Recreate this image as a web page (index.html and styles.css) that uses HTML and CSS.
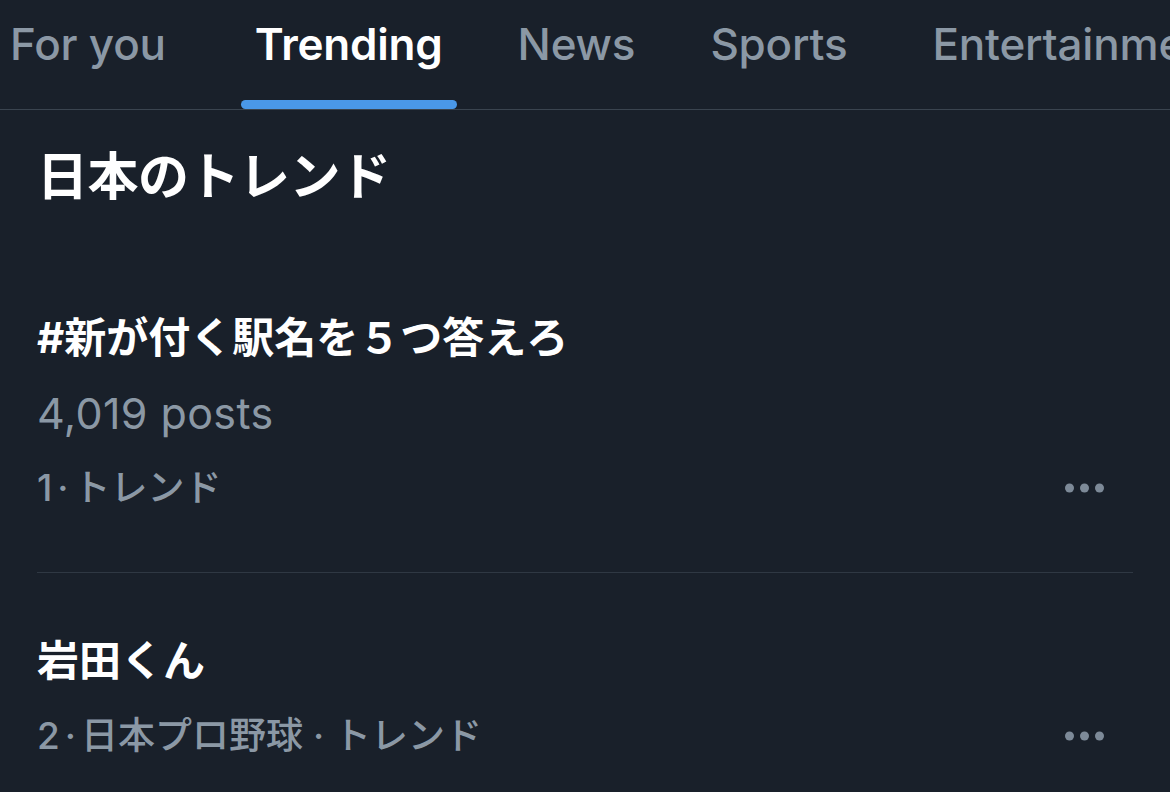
FILE: index.html
```html
<!DOCTYPE html>
<html lang="ja">
<head>
<meta charset="utf-8">
<title>Trending</title>
<link rel="stylesheet" href="styles.css">
</head>
<body>
<nav class="tabs">
  <div class="tab"><span class="label">For you</span></div>
  <div class="tab active"><span class="label">Trending</span><span class="bar"></span></div>
  <div class="tab"><span class="label">News</span></div>
  <div class="tab"><span class="label">Sports</span></div>
  <div class="tab tab-wide"><span class="label">Entertainment</span></div>
</nav>
<main class="content">
  <h1 class="heading">日本のトレンド</h1>
  <section class="trend first">
    <div class="title">#新が付く駅名を５つ答えろ</div>
    <div class="posts">4,019 posts</div>
    <div class="meta-row">
      <span class="meta">1<span class="dot">·</span>トレンド</span>
      <svg class="more" width="48" height="20" viewBox="0 0 48 20"><circle cx="8.5" cy="10" r="4.5"/><circle cx="23.5" cy="10" r="4.5"/><circle cx="38.5" cy="10" r="4.5"/></svg>
    </div>
  </section>
  <section class="trend">
    <div class="title">岩田くん</div>
    <div class="meta-row">
      <span class="meta">2<span class="dot">·</span>日本プロ野球 · トレンド</span>
      <svg class="more" width="48" height="20" viewBox="0 0 48 20"><circle cx="8.5" cy="10" r="4.5"/><circle cx="23.5" cy="10" r="4.5"/><circle cx="38.5" cy="10" r="4.5"/></svg>
    </div>
  </section>
</main>
</body>
</html>
```

FILE: styles.css
```css
html, body {
  margin: 0;
  padding: 0;
  background: #19202a;
  overflow: hidden;
}
body {
  font-family: Inter, "Noto Sans CJK JP", sans-serif;
  color: #ffffff;
  width: 1170px;
  height: 792px;
}
.tabs {
  display: flex;
  height: 109px;
  border-bottom: 1px solid #3a444f;
  gap: 47px;
  white-space: nowrap;
  overflow: hidden;
  margin-left: -4px;
}
.tab {
  display: flex;
  flex-direction: column;
  align-items: stretch;
  padding: 0 14px;
  font-size: 44px;
  font-weight: 500;
  color: #8b98a5;
  letter-spacing: -0.2px;
}
.tab .label {
  line-height: 88px;
}
.tab.active {
  color: #ffffff;
  font-weight: 600;
  padding: 0;
  margin-left: 14px;
}
.tab.active .label {
  padding: 0 14px;
}
.tab-wide {
  margin-left: 10px;
}
.tab .bar {
  margin-top: auto;
  height: 9px;
  border-radius: 5px;
  background: #4a98e8;
}
.content {
  padding: 0 37px;
}
.heading {
  margin: 38px 0 0;
  font-size: 51px;
  font-weight: 700;
  line-height: 58px;
  letter-spacing: -0.5px;
}
.trend {
  border-bottom: 1px solid #2f3843;
  padding: 50px 0 53px;
}
.trend.first {
  margin-top: 44px;
}
.trend:last-child {
  border-bottom: none;
}
.title {
  font-size: 42px;
  font-weight: 700;
  line-height: 76px;
}
.posts {
  font-size: 43px;
  font-weight: 400;
  color: #8b98a5;
  line-height: 75px;
  letter-spacing: 0.4px;
}
.meta-row {
  display: flex;
  align-items: center;
  justify-content: space-between;
  height: 68px;
}
.meta {
  font-size: 37px;
  font-weight: 500;
  color: #8b98a5;
}
.dot {
  margin: 0 5px;
}
.more {
  fill: #7d8a98;
  margin-right: 24px;
  margin-top: 6px;
}
```
